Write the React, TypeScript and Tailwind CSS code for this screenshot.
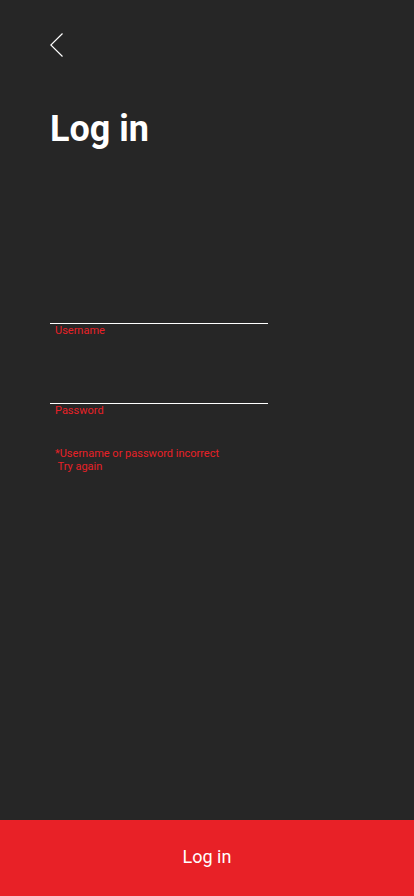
export default function App() {
  return (
    <div className="flex h-[896px] w-full flex-col bg-[#262626] font-['Roboto',sans-serif]">
      <div className="flex flex-1 flex-col px-[50px]">
        <button type="button" aria-label="Back" className="mt-[33px] h-[24px] w-[14px]">
          <svg width="14" height="24" viewBox="0 0 14 24" fill="none">
            <polyline
              points="12.5,0.5 0.8,12 12.5,23.5"
              stroke="#ffffff"
              strokeWidth="1.2"
              strokeLinejoin="miter"
            />
          </svg>
        </button>

        <h1 className="mt-[54px] text-[36px] font-bold leading-none text-white">Log in</h1>

        <div className="mt-[176px] w-[218px]">
          <div className="h-px bg-white" />
          <label className="block pl-[5px] text-[11px] leading-[13px] text-[#e82127]">Username</label>
        </div>

        <div className="mt-[66px] w-[218px]">
          <div className="h-px bg-white" />
          <label className="block pl-[5px] text-[11px] leading-[13px] text-[#e82127]">Password</label>
        </div>

        <p className="mt-[30px] whitespace-pre pl-[5px] text-[11px] leading-[13px] text-[#e82127]">
          {"*Username or password incorrect\n Try again"}
        </p>
      </div>

      <button
        type="button"
        className="flex h-[76px] w-full items-center justify-center bg-[#e82127] pb-[4px] text-[18px] text-white"
      >
        Log in
      </button>
    </div>
  );
}
